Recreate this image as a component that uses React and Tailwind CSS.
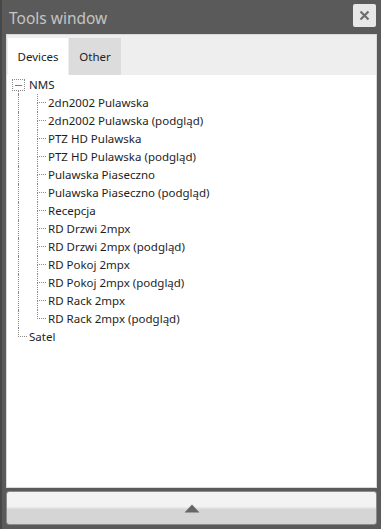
import React from 'react'

const children = [
  '2dn2002 Pulawska',
  '2dn2002 Pulawska (podgląd)',
  'PTZ HD Pulawska',
  'PTZ HD Pulawska (podgląd)',
  'Pulawska Piaseczno',
  'Pulawska Piaseczno (podgląd)',
  'Recepcja',
  'RD Drzwi 2mpx',
  'RD Drzwi 2mpx (podgląd)',
  'RD Pokoj 2mpx',
  'RD Pokoj 2mpx (podgląd)',
  'RD Rack 2mpx',
  'RD Rack 2mpx (podgląd)',
]

// vertical line passing through a row
function PassLine() {
  return (
    <div className="w-[19px] shrink-0 self-stretch">
      <div className="ml-[8px] h-full border-l border-dotted border-[#8a8a8a]" />
    </div>
  )
}

// ├ or └ connector
function Connector({ last }) {
  return (
    <div className="w-[19px] shrink-0 self-stretch flex flex-col">
      <div className="ml-[8px] w-[9px] h-[9px] border-l border-b border-dotted border-[#8a8a8a]" />
      <div className={'ml-[8px] flex-1 ' + (last ? '' : 'border-l border-dotted border-[#8a8a8a]')} />
    </div>
  )
}

function Row({ children }) {
  return <div className="flex h-[18px] items-stretch">{children}</div>
}

export default function App() {
  return (
    <div
      className="w-[381px] h-[529px] bg-[#5a5a5a] border-l-2 border-[#474747] flex flex-col pl-[4px] pr-[4px] pb-[4px]"
      style={{ fontFamily: '"Noto Sans", "Open Sans", sans-serif' }}
    >
      {/* title bar */}
      <div className="h-[34px] flex items-center justify-between shrink-0">
        <span className="pl-[3px] mt-[4px] text-[15.5px] text-[#c4c4c4] leading-none">Tools window</span>
        <button className="w-[23px] h-[23px] mr-[1px] mb-[3px] bg-[#e7e7e7] rounded-[2px] flex items-center justify-center">
          <svg width="11" height="11" viewBox="0 0 11 11">
            <path d="M1.5 1.5 L9.5 9.5 M9.5 1.5 L1.5 9.5" stroke="#6e6e6e" strokeWidth="2.2" />
          </svg>
        </button>
      </div>

      {/* panel */}
      <div className="flex-1 flex flex-col border border-[#d9d9d9] bg-white min-h-0">
        <div className="h-[40px] bg-[#eeeeee] flex items-end pl-[1px] shrink-0">
          <div className="h-[37px] w-[60px] bg-white flex items-center justify-center text-[11.5px] text-[#222]">
            Devices
          </div>
          <div className="h-[37px] w-[52px] ml-[1px] bg-[#dcdcdc] flex items-center justify-center text-[11.5px] text-[#222]">
            Other
          </div>
        </div>

        <div className="flex-1 pt-[1px] pl-[3px] text-[11.5px] text-[#1e1e1e] leading-[18px]">
          <Row>
            <div className="w-[19px] shrink-0 flex flex-col">
              <div className="ml-[2px] mt-[3px] w-[13px] h-[12px] border border-dotted border-[#8a8a8a] flex items-center justify-center">
                <div className="w-[7px] h-px bg-[#7a7a7a]" />
              </div>
              <div className="ml-[8px] flex-1 border-l border-dotted border-[#8a8a8a]" />
            </div>
            <span>NMS</span>
          </Row>
          {children.map((name, i) => (
            <Row key={name}>
              <PassLine />
              <Connector last={i === children.length - 1} />
              <span>{name}</span>
            </Row>
          ))}
          <Row>
            <Connector last />
            <span>Satel</span>
          </Row>
        </div>
      </div>

      {/* bottom button */}
      <button className="mt-[3px] h-[34px] shrink-0 rounded-[3px] border border-[#8c8c8c] bg-gradient-to-b from-[#f3f3f3] from-45% to-[#d5d5d5] to-55% flex items-center justify-center">
        <svg width="16" height="9" viewBox="0 0 16 9">
          <path d="M8 0.5 L15.5 8.5 L0.5 8.5 Z" fill="#666" />
        </svg>
      </button>
    </div>
  )
}
